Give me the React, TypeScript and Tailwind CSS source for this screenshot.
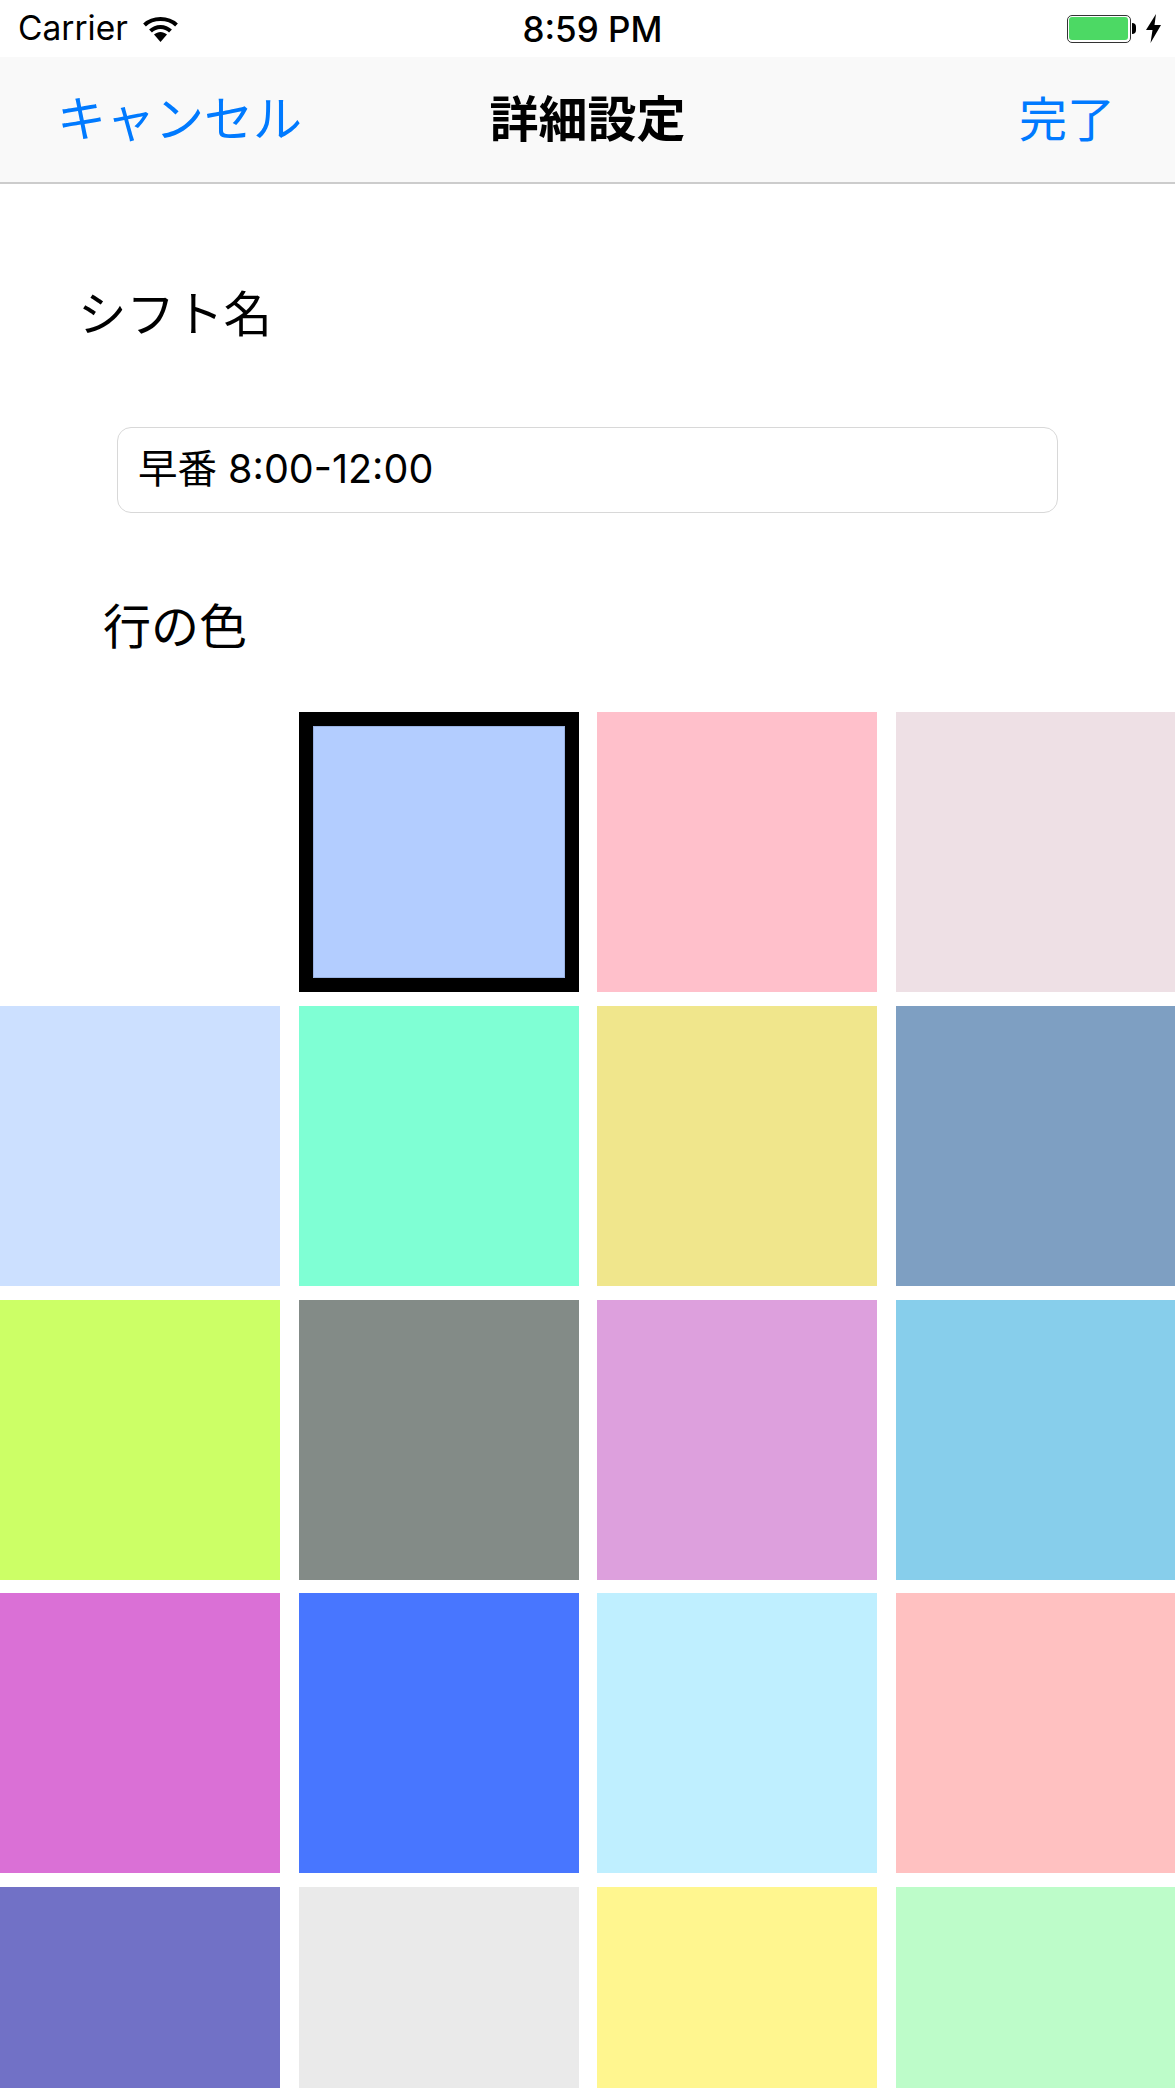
const swatches = [
  '#ffffff', '#b3cdff', '#ffc0cb', '#eee0e5',
  '#cce0ff', '#7fffd4', '#f0e68c', '#7e9fc2',
  '#ccff66', '#838b87', '#dda0dd', '#87ceeb',
  '#da70d6', '#4876ff', '#bfefff', '#ffc1c1',
  '#7171c6', '#eaeaea', '#fff68f', '#bdfcc9',
];

const selectedIndex = 1;

function StatusBar() {
  return (
    <div className="grid h-[57px] grid-cols-3 items-center bg-white font-['Inter',sans-serif] text-black">
      <div className="flex items-center gap-[15px] pl-[18px] text-[33.5px]">
        <span>Carrier</span>
        <svg viewBox="0 0 35 26" className="h-[26px] w-[35px]" fill="none" stroke="black" strokeWidth="4">
          <path d="M1.5 9 C10 1 25 1 33.5 9" />
          <path d="M7.5 15 C13 9.5 22 9.5 27.5 15" />
          <path d="M11 18.5 L17.5 26 L24 18.5 C20 15 15 15 11 18.5 Z" fill="black" stroke="none" />
        </svg>
      </div>
      <div className="pl-[10px] pt-[1px] text-center text-[35px] font-medium">8:59 PM</div>
      <div className="flex items-center justify-end pr-[14px]">
        <div className="h-[28px] w-[64px] rounded-[5px] border-[1.5px] border-[#333333] bg-white p-[1.5px]">
          <div className="h-full rounded-[3px] bg-[#4cd964]" />
        </div>
        <div className="ml-[1px] h-[11px] w-[4px] rounded-r-full bg-black" />
        <svg viewBox="0 0 15 29" className="ml-[10px] h-[29px] w-[15px]" fill="black">
          <path d="M10 0 L0 16 L6.5 16 L4.5 29 L15 11 L8.5 11 Z" />
        </svg>
      </div>
    </div>
  );
}

function NavBar() {
  return (
    <div className="grid h-[127px] grid-cols-3 items-center border-b-2 border-[#cccccc] bg-[#f9f9f9] pb-[7px] text-[49px]">
      <div className="pl-[57px] text-[#007aff]">キャンセル</div>
      <div className="text-center font-bold text-black">詳細設定</div>
      <div className="pr-[60px] text-right text-[48px] text-[#007aff]">完了</div>
    </div>
  );
}

export default function App() {
  return (
    <div className="h-[2088px] w-[1175px] overflow-hidden bg-white font-['Noto_Sans_CJK_JP',sans-serif]">
      <StatusBar />
      <NavBar />
      <div className="pt-[97px] text-[48.5px] leading-[60px] text-black">
        <div className="pl-[78px]">シフト名</div>
        <div className="ml-[117px] mt-[86px] flex h-[86px] w-[941px] items-center rounded-[14px] border-[1.5px] border-[#d8d8d8] pb-[3px] pl-[20px] font-['Inter','Noto_Sans_CJK_JP',sans-serif] text-[39.5px]">
          早番 8:00-12:00
        </div>
        <div className="mt-[80px] pl-[103px] text-[48px]">行の色</div>
      </div>
      <div className="mt-[59px] grid w-[1200px] grid-cols-[280px_280px_280px_280px] gap-x-[18.5px] gap-y-[13.75px]">
        {swatches.map((color, i) =>
          i === selectedIndex ? (
            <div key={i} className="h-[280px] border-[14px] border-black">
              <div className="h-full border border-[#9ab3e3]" style={{ backgroundColor: color }} />
            </div>
          ) : (
            <div key={i} className="h-[280px]" style={{ backgroundColor: color }} />
          ),
        )}
      </div>
    </div>
  );
}
